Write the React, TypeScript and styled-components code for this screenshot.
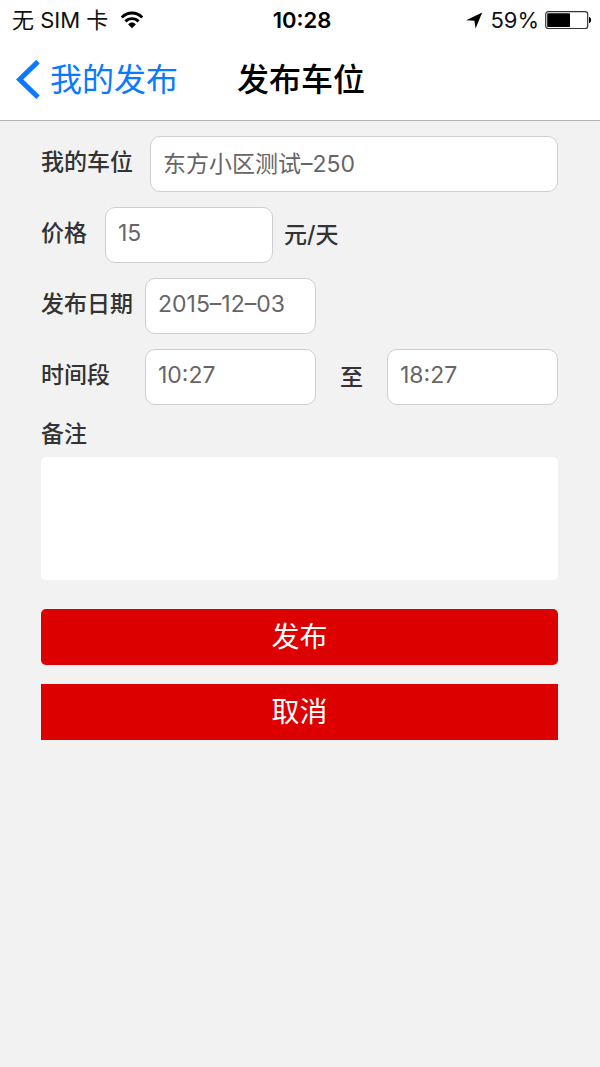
import React from "react";
import styled, { createGlobalStyle } from "styled-components";

const GlobalStyle = createGlobalStyle`
  *, *::before, *::after { box-sizing: border-box; }
  body {
    margin: 0;
    background: #f2f2f2;
    color: #333;
    font-family: Inter, "Noto Sans CJK SC", sans-serif;
  }
  input, textarea, button { font: inherit; margin: 0; }
`;

const Page = styled.div`
  min-height: 100vh;
  display: flex;
  flex-direction: column;
  background: #f2f2f2;
`;

const Header = styled.header`
  background: #fff;
  border-bottom: 1px solid #b4b4b6;
`;

const StatusBar = styled.div`
  display: grid;
  grid-template-columns: 1fr auto 1fr;
  align-items: center;
  height: 40px;
  padding: 0 8px 0 12px;
  color: #111;
  font-size: 22px;
  line-height: 40px;
`;

const StatusGroup = styled.div<{ $end?: boolean }>`
  display: flex;
  align-items: center;
  justify-content: ${(p) => (p.$end ? "flex-end" : "flex-start")};
  gap: ${(p) => (p.$end ? "6px" : "12px")};
  white-space: nowrap;
`;

const Clock = styled.time`
  color: #000;
  font-weight: 600;
`;

const NavBar = styled.nav`
  display: grid;
  grid-template-columns: 1fr auto 1fr;
  align-items: center;
  height: 80px;
  padding: 0 14px 0 16px;
`;

const BackLink = styled.a`
  display: flex;
  align-items: center;
  gap: 9px;
  color: #0a7aff;
  font-size: 32px;
  line-height: 40px;
  text-decoration: none;
  white-space: nowrap;
`;

const Title = styled.h1`
  margin: 0;
  color: #000;
  font-size: 32px;
  font-weight: 500;
  line-height: 40px;
`;

const Form = styled.form`
  display: flex;
  flex-direction: column;
  gap: 15px;
  padding: 15px 42px 32px 41px;
`;

const Row = styled.div`
  display: flex;
  align-items: center;
`;

const Label = styled.label<{ $width?: number }>`
  flex: none;
  width: ${(p) => (p.$width ? `${p.$width}px` : "auto")};
  padding-bottom: 5px;
  font-size: 23px;
  font-weight: 500;
  line-height: 28px;
  white-space: nowrap;
`;

const Unit = styled.span`
  padding: 0 11px;
  font-size: 23px;
  font-weight: 500;
  line-height: 28px;
`;

const Between = styled.span`
  flex: 1;
  font-size: 23px;
  font-weight: 500;
  line-height: 28px;
  text-align: center;
`;

const Field = styled.input<{ $width?: number }>`
  flex: ${(p) => (p.$width ? "none" : "1")};
  width: ${(p) => (p.$width ? `${p.$width}px` : "auto")};
  min-width: 0;
  height: 56px;
  padding: 0 12px 4px;
  border: 1px solid #cfcfcf;
  border-radius: 10px;
  outline: none;
  background: #fff;
  color: #666;
  font-size: 23px;
`;

const Remark = styled.div`
  display: flex;
  flex-direction: column;
`;

const RemarkBox = styled.textarea`
  width: 100%;
  height: 123px;
  margin-top: 4px;
  padding: 12px;
  border: 0;
  border-radius: 5px;
  outline: none;
  resize: none;
  background: #fff;
  color: #666;
  font-size: 23px;
`;

const Actions = styled.div`
  display: flex;
  flex-direction: column;
  gap: 19px;
  padding-top: 14px;
`;

const ActionButton = styled.button<{ $rounded?: boolean }>`
  width: 100%;
  height: 56px;
  padding: 0;
  border: 0;
  border-radius: ${(p) => (p.$rounded ? "5px" : "0")};
  background: #dc0000;
  color: #fff;
  font-size: 28px;
  line-height: 56px;
  cursor: pointer;
`;

const WifiIcon = () => (
  <svg width="24" height="18" viewBox="0 0 24 18" fill="none" stroke="#000" strokeWidth="2.9" aria-hidden="true">
    <path d="M1.8 6.4C7.4 0.6 16.6 0.6 22.2 6.4" />
    <path d="M5.4 10.4C9.1 6.7 14.9 6.7 18.6 10.4" />
    <path d="M8.2 13.4C10.3 11 13.7 11 15.8 13.4L12 17.2Z" fill="#000" stroke="none" />
  </svg>
);

const LocationIcon = () => (
  <svg width="18" height="17" viewBox="0 0 18 17" fill="#000" aria-hidden="true">
    <path d="M16.2 0.5L9.6 16.5L8.4 8.8L0.2 8.2Z" />
  </svg>
);

const BatteryIcon = () => (
  <svg width="47" height="20" viewBox="0 0 47 20" aria-hidden="true">
    <rect x="0.7" y="1.7" width="42" height="16.8" rx="2.6" fill="#fff" stroke="#333" strokeWidth="1.2" />
    <rect x="2.2" y="3.2" width="22.8" height="13.8" rx="0.8" fill="#000" />
    <path d="M44 7C46.8 7.4 46.8 12.8 44 13.2Z" fill="#000" />
  </svg>
);

const BackIcon = () => (
  <svg width="25" height="40" viewBox="0 0 25 40" fill="none" stroke="#0a7aff" strokeWidth="5" aria-hidden="true">
    <path d="M22 1.6L3.6 19.4L22 37.2" />
  </svg>
);

export default function App() {
  return (
    <Page>
      <GlobalStyle />
      <Header>
        <StatusBar>
          <StatusGroup>
            <span>无 SIM 卡</span>
            <WifiIcon />
          </StatusGroup>
          <Clock>10:28</Clock>
          <StatusGroup $end>
            <LocationIcon />
            <span>59%</span>
            <BatteryIcon />
          </StatusGroup>
        </StatusBar>
        <NavBar>
          <BackLink href="#">
            <BackIcon />
            我的发布
          </BackLink>
          <Title>发布车位</Title>
        </NavBar>
      </Header>
      <Form onSubmit={(e: React.FormEvent) => e.preventDefault()}>
        <Row>
          <Label htmlFor="space" $width={109}>我的车位</Label>
          <Field id="space" defaultValue="东方小区测试–250" />
        </Row>
        <Row>
          <Label htmlFor="price" $width={64}>价格</Label>
          <Field id="price" $width={168} defaultValue="15" />
          <Unit>元/天</Unit>
        </Row>
        <Row>
          <Label htmlFor="date" $width={104}>发布日期</Label>
          <Field id="date" $width={171} defaultValue="2015–12–03" />
        </Row>
        <Row>
          <Label htmlFor="start" $width={104}>时间段</Label>
          <Field id="start" $width={171} defaultValue="10:27" />
          <Between>至</Between>
          <Field aria-label="结束时间" $width={171} defaultValue="18:27" />
        </Row>
        <Remark>
          <Label htmlFor="remark">备注</Label>
          <RemarkBox id="remark" />
        </Remark>
        <Actions>
          <ActionButton type="submit" $rounded>发布</ActionButton>
          <ActionButton type="button">取消</ActionButton>
        </Actions>
      </Form>
    </Page>
  );
}
